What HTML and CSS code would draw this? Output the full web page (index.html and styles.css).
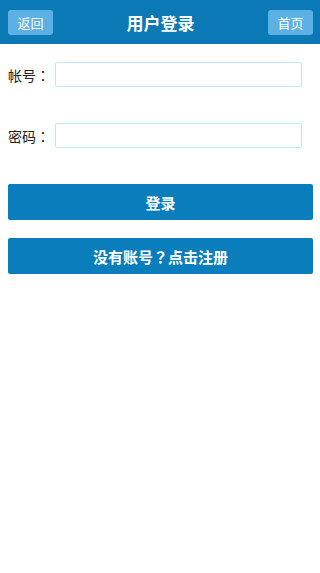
FILE: index.html
```html
<!DOCTYPE html>
<html lang="zh">
<head>
<meta charset="utf-8">
<title>用户登录</title>
<link rel="stylesheet" href="styles.css">
</head>
<body>
<header class="topbar">
  <a class="navbtn">返回</a>
  <h1 class="title">用户登录</h1>
  <a class="navbtn">首页</a>
</header>
<main class="form">
  <div class="row">
    <label class="label">帐号<span class="punct" lang="zh-Hant">：</span></label>
    <input class="field" type="text">
  </div>
  <div class="row">
    <label class="label">密码<span class="punct" lang="zh-Hant">：</span></label>
    <input class="field" type="text">
  </div>
  <div class="actions">
    <button class="btn">登录</button>
    <button class="btn">没有账号<span class="punct" lang="zh-Hant">？</span>点击注册</button>
  </div>
</main>
</body>
</html>
```
FILE: styles.css
```css
* { box-sizing: border-box; }
html, body { margin: 0; padding: 0; background: #fff; }
body {
  font-family: "Noto Sans CJK SC", "Liberation Sans", sans-serif;
  color: #222;
}
.punct {
  font-family: "Noto Sans CJK TC", "Noto Sans CJK SC", sans-serif;
}
.topbar {
  height: 44px;
  background: #0a79b6;
  display: flex;
  align-items: center;
  justify-content: space-between;
  padding: 0 7px 0 8px;
}
.navbtn {
  width: 45px;
  height: 25px;
  background: #5db0e4;
  color: #fff;
  border-radius: 3px;
  font-size: 13px;
  display: flex;
  align-items: center;
  justify-content: center;
  line-height: 1;
}
.title {
  margin: 0;
  color: #fff;
  font-size: 17px;
  font-weight: bold;
  line-height: 1;
}
.form {
  padding: 18px 18px 0 8px;
}
.row {
  display: flex;
  align-items: center;
  height: 25px;
  margin-bottom: 36px;
}
.label {
  width: 47px;
  font-size: 14px;
  color: #222;
  line-height: 1;
}
.field {
  flex: 1;
  height: 25px;
  border: 1px solid #bfe9f6;
  border-radius: 2px;
  background: #fff;
  outline: none;
  padding: 0 4px;
}
.actions {
  display: flex;
  flex-direction: column;
  gap: 18px;
  margin-right: -11px;
}
.btn {
  height: 36px;
  border: none;
  border-radius: 2px;
  background: #0a7dbd;
  color: #fff;
  font-family: "Noto Sans CJK SC", "Liberation Sans", sans-serif;
  font-size: 15px;
  font-weight: bold;
  padding: 0;
}
```
